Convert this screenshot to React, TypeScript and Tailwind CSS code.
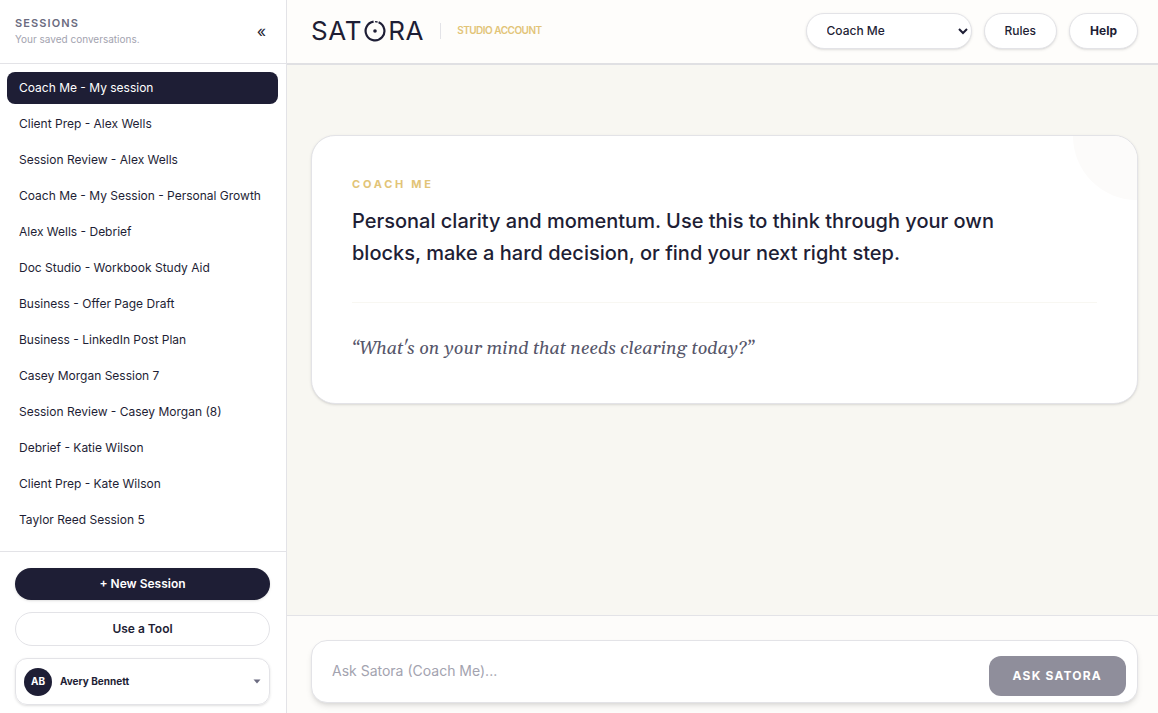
import { useState } from "react";

const sessions: string[] = [
  "Coach Me - My session",
  "Client Prep - Alex Wells",
  "Session Review - Alex Wells",
  "Coach Me - My Session - Personal Growth",
  "Alex Wells - Debrief",
  "Doc Studio - Workbook Study Aid",
  "Business - Offer Page Draft",
  "Business - LinkedIn Post Plan",
  "Casey Morgan Session 7",
  "Session Review - Casey Morgan (8)",
  "Debrief - Katie Wilson",
  "Client Prep - Kate Wilson",
  "Taylor Reed Session 5",
];

function Logo() {
  return (
    <a
      href="#"
      aria-label="Satora"
      className="flex items-center font-['Inter',sans-serif] text-[26px] leading-8 tracking-wide text-[#1e1e35]"
    >
      <span>SAT</span>
      <svg viewBox="0 0 22 22" className="mx-0.5 size-[22px]" fill="none">
        <path
          d="M9.6 1.7A9.4 9.4 0 1 0 14.6 2.3"
          stroke="currentColor"
          strokeWidth="2.2"
        />
        <circle cx="11" cy="11" r="1.8" fill="currentColor" />
        <path d="M11 1.6L13.6 2" stroke="currentColor" strokeWidth="1.4" />
      </svg>
      <span>RA</span>
    </a>
  );
}

function Sidebar() {
  const [active, setActive] = useState(0);

  return (
    <aside className="flex w-[287px] shrink-0 flex-col border-r border-[#e3e3e7] bg-white">
      <div className="flex h-16 shrink-0 items-center justify-between border-b border-[#e3e3e7] pr-5 pb-0.5 pl-[15px]">
        <div>
          <h2 className="text-[11px] leading-4 font-semibold tracking-widest text-[#6b6b80]">
            SESSIONS
          </h2>
          <p className="text-[10px] leading-4 text-[#a3a3af]">
            Your saved conversations.
          </p>
        </div>
        <button
          type="button"
          aria-label="Collapse sessions"
          className="text-base"
        >
          «
        </button>
      </div>
      <nav className="flex min-h-0 flex-1 flex-col gap-1 overflow-hidden pt-2 pr-2 pl-[7px]">
        {sessions.map((session, index) => (
          <button
            key={session}
            type="button"
            onClick={() => setActive(index)}
            className={`h-8 shrink-0 truncate rounded-lg px-3 text-left text-xs ${
              index === active ? "bg-[#1e1e35] text-white" : ""
            }`}
          >
            {session}
          </button>
        ))}
      </nav>
      <div className="flex shrink-0 flex-col gap-3 border-t border-[#e3e3e7] pt-4 pr-4 pb-2 pl-[15px]">
        <button
          type="button"
          className="h-8 rounded-full bg-[#1e1e35] text-xs font-semibold text-white shadow-sm"
        >
          + New Session
        </button>
        <button
          type="button"
          className="h-[34px] rounded-full border border-[#e3e3e7] text-xs font-semibold"
        >
          Use a Tool
        </button>
        <button
          type="button"
          className="flex h-[47px] items-center gap-2 rounded-xl border border-[#e3e3e7] px-2 shadow-sm"
        >
          <span className="flex size-7 items-center justify-center rounded-full bg-[#1e1e35] text-[10px] font-bold text-white">
            AB
          </span>
          <span className="text-[10px] font-bold">Avery Bennett</span>
          <svg viewBox="0 0 8 5" className="ml-auto h-[5px] w-2">
            <path d="M0.5 0.5h7L4 4.5z" fill="#6b6b80" />
          </svg>
        </button>
      </div>
    </aside>
  );
}

function Header() {
  return (
    <header className="flex h-[65px] shrink-0 items-center justify-between border-b-2 border-[#e0e0e3] bg-[#fefdfb] pr-5 pb-0.5 pl-6">
      <div className="flex items-center">
        <Logo />
        <span className="ml-4 h-4 w-px bg-[#e3e3e7]" />
        <span className="ml-4 text-[10px] font-semibold tracking-tighter text-[#e2c477]">
          STUDIO ACCOUNT
        </span>
      </div>
      <div className="flex items-center gap-3 text-xs font-medium">
        <select
          aria-label="Mode"
          className="h-9 w-[166px] rounded-full border border-[#e3e3e7] bg-white pl-4 shadow-sm"
        >
          <option>Coach Me</option>
        </select>
        <button
          type="button"
          className="h-9 rounded-full border border-[#e3e3e7] bg-white px-5 shadow-sm"
        >
          Rules
        </button>
        <button
          type="button"
          className="h-9 rounded-full border border-[#e3e3e7] bg-white px-5 font-bold shadow-sm"
        >
          Help
        </button>
      </div>
    </header>
  );
}

function IntroCard() {
  return (
    <section className="relative overflow-hidden rounded-3xl border border-[#e3e3e7] bg-white p-10 shadow-sm">
      <div className="absolute -top-16 -right-16 size-32 rounded-full bg-[#fcfbfa]" />
      <p className="text-[11px] leading-4 font-bold tracking-[0.25em] text-[#e2c477]">
        COACH ME
      </p>
      <h1 className="mt-[13px] max-w-2xl text-xl leading-8 font-medium">
        Personal clarity and momentum. Use this to think through your own
        blocks, make a hard decision, or find your next right step.
      </h1>
      <p className="mt-[33px] border-t border-[#f8f7f2] pt-8 font-['Georgia','Gelasio','Liberation_Serif',serif] text-lg leading-7 text-[#56566a] italic">
        “What's on your mind that needs clearing today?”
      </p>
    </section>
  );
}

function Composer() {
  return (
    <footer className="shrink-0 border-t border-[#e3e3e7] bg-[#fdfcfa] pt-6 pr-5 pb-[10px] pl-6">
      <form
        className="flex items-end rounded-2xl border border-[#e3e3e7] bg-white pt-[15px] pr-[11px] pb-[6px] pl-5 shadow-md"
        onSubmit={(e) => e.preventDefault()}
      >
        <textarea
          aria-label="Message"
          rows={1}
          placeholder="Ask Satora (Coach Me)..."
          className="h-10 flex-1 resize-none pt-[3px] text-sm leading-6 outline-none placeholder:text-[#a3a3af]"
        />
        <button
          type="submit"
          className="h-10 rounded-xl bg-[#8f8e9b] px-6 text-xs font-bold tracking-widest text-white"
        >
          ASK SATORA
        </button>
      </form>
    </footer>
  );
}

export default function App() {
  return (
    <div className="flex h-screen font-['Inter',sans-serif] text-[#1e1e35]">
      <Sidebar />
      <div className="flex min-w-0 flex-1 flex-col bg-[#f8f7f2]">
        <Header />
        <main className="min-h-0 flex-1 overflow-hidden pt-[70px] pr-5 pl-6">
          <IntroCard />
        </main>
        <Composer />
      </div>
    </div>
  );
}
